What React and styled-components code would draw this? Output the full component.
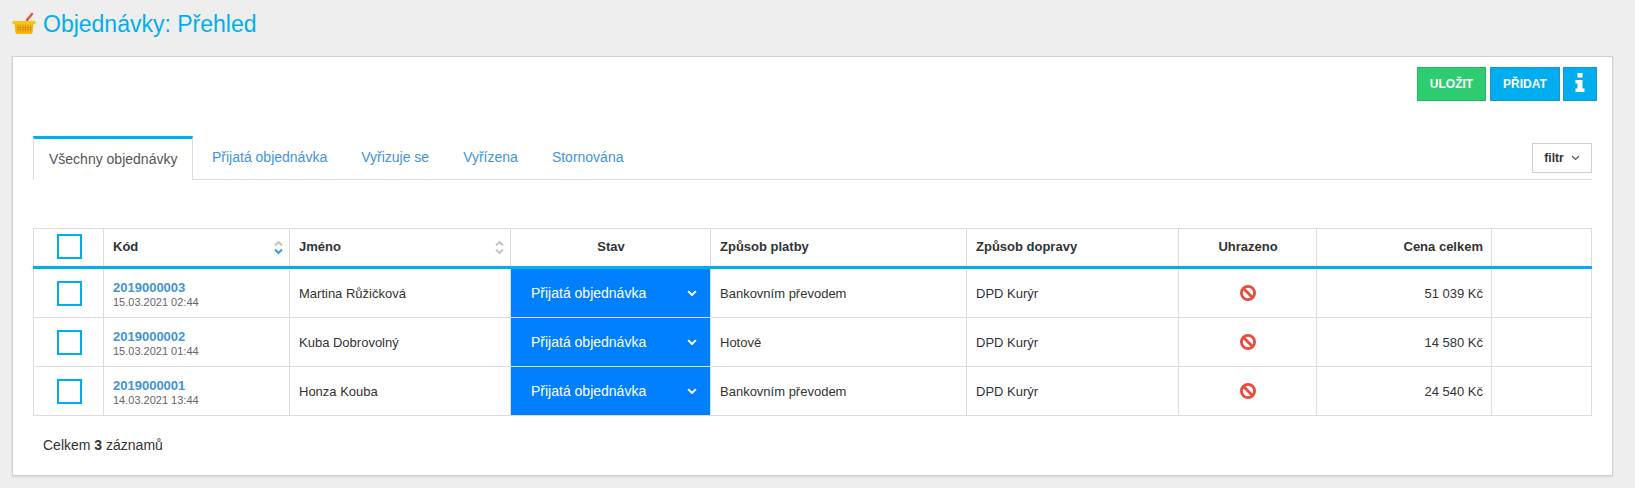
import React from 'react';
import styled, { createGlobalStyle } from 'styled-components';

const GlobalStyle = createGlobalStyle`
  html, body {
    margin: 0;
    padding: 0;
    background: #eeeeee;
    font-family: "Liberation Sans", Arial, sans-serif;
    color: #333;
  }
`;

const Page = styled.div`
  width: 1635px;
  height: 488px;
  overflow: hidden;
  box-sizing: border-box;
  padding: 0 22px 0 12px;
`;

const PageHeader = styled.div`
  height: 56px;
  display: flex;
  align-items: flex-start;
  padding-top: 10px;
  box-sizing: border-box;
  gap: 7px;
`;

const Title = styled.h1`
  margin: 0;
  font-size: 23px;
  font-weight: 400;
  line-height: 28px;
  color: #00aeef;
`;

const BasketIcon = styled.svg`
  flex: none;
  margin-top: 2px;
`;

const Panel = styled.div`
  height: 420px;
  box-sizing: border-box;
  background: #fff;
  border: 1px solid #cfcfcf;
  box-shadow: 0 1px 2px rgba(0, 0, 0, 0.1);
  padding: 10px 20px 0 20px;
`;

const Toolbar = styled.div`
  display: flex;
  justify-content: flex-end;
  gap: 3px;
  margin-right: -5px;
  height: 34px;
`;

const ActionButton = styled.button`
  height: 34px;
  width: ${props => props.width};
  margin-right: ${props => props.gapRight || 0};
  padding: 0;
  box-sizing: border-box;
  border: 1px solid ${props => props.green ? '#27b565' : '#1c94d8'};
  background: ${props => props.green ? '#2ecc71' : '#00aeef'};
  color: #fff;
  font-family: inherit;
  font-size: 12px;
  font-weight: 700;
  display: flex;
  align-items: center;
  justify-content: center;
`;

const InfoShape = styled.svg`
  margin-top: -4px;
`;

const TabBar = styled.div`
  margin-top: 35px;
  height: 44px;
  box-sizing: border-box;
  display: flex;
  align-items: flex-start;
  border-bottom: 1px solid #dcdcdc;
`;

const ActiveTab = styled.div`
  width: 160px;
  height: 44px;
  box-sizing: border-box;
  border-top: 3px solid #00aeef;
  border-left: 1px solid #dcdcdc;
  border-right: 1px solid #dcdcdc;
  background: #fff;
  color: #555;
  font-size: 14px;
  padding-top: 12px;
  padding-left: 15px;
  line-height: 17px;
  margin-right: 2px;
`;

const Tab = styled.div`
  color: #3f94dc;
  font-size: 14px;
  line-height: 17px;
  padding: 13px 17px 0;
`;

const FilterButton = styled.button`
  margin-left: auto;
  margin-top: 7px;
  width: 60px;
  height: 30px;
  box-sizing: border-box;
  background: #fff;
  border: 1px solid #cfcfcf;
  color: #333;
  font-family: inherit;
  font-size: 12px;
  font-weight: 700;
  display: flex;
  align-items: center;
  justify-content: center;
  gap: 7px;
  padding: 0;
`;

const Table = styled.table`
  margin-top: 48px;
  width: 1558px;
  table-layout: fixed;
  border-collapse: collapse;
  font-size: 13px;
`;

const HeadCell = styled.th`
  height: 39px;
  padding: 0 8px 2px 9px;
  border: 1px solid #dcdcdc;
  border-bottom: 3px solid #00aeef;
  box-sizing: border-box;
  font-size: 13px;
  font-weight: 700;
  color: #333;
  text-align: ${props => props.align || 'left'};
  position: relative;
`;

const Cell = styled.td`
  height: 49px;
  padding: ${props => props.pushDown ? '3px' : '0'} 8px 0 9px;
  border: 1px solid #dcdcdc;
  box-sizing: border-box;
  color: #333;
  text-align: ${props => props.align || 'left'};
`;

const StatusCell = styled.td`
  height: 49px;
  padding: 0;
  border: 1px solid #dcdcdc;
  box-sizing: border-box;
`;

const StatusSelect = styled.div`
  height: 48px;
  background: #007fff;
  color: #fff;
  font-size: 14px;
  display: flex;
  align-items: center;
  justify-content: space-between;
  padding: 0 13px 0 20px;
`;

const CheckBox = styled.span`
  display: block;
  width: 25px;
  height: 25px;
  box-sizing: border-box;
  border: 2px solid #00aeef;
  margin: 0 auto;
`;

const CodeLink = styled.div`
  color: #3f94dc;
  font-size: 13px;
  font-weight: 700;
  line-height: 15px;
`;

const DateText = styled.div`
  color: #666;
  font-size: 11px;
  line-height: 15px;
`;

const SortIcon = styled.svg`
  position: absolute;
  right: 6px;
  top: 11px;
`;

const NoIconShape = styled.svg`
  display: block;
  margin: 0 auto;
`;

const Footer = styled.div`
  margin-top: 21px;
  padding-left: 10px;
  font-size: 14px;
  line-height: 16px;
  color: #333;
`;

const Basket = () => (
  <BasketIcon width="24" height="22" viewBox="0 0 24 22">
    <path d="M15 8 L20 2" stroke="#e8503a" strokeWidth="2.4" strokeLinecap="round" />
    <path d="M0.5 9 H23.5 V12 H0.5 Z" fill="#f5c518" />
    <path d="M2.5 12 H21.5 L20.5 21 Q20.4 22 19 22 H5 Q3.6 22 3.5 21 Z" fill="#f2b90f" />
    <path d="M6 13.5 V19.5 M8.5 13.5 V19.5 M11 13.5 V19.5 M13.5 13.5 V19.5 M16 13.5 V19.5 M18.5 13.5 V19.5" stroke="#e08a12" strokeWidth="1" />
    <path d="M5 15.5 H19.5 M5 17.5 H19.5" stroke="#e08a12" strokeWidth="0.7" />
  </BasketIcon>
);

const InfoIcon = () => (
  <InfoShape width="10" height="19" viewBox="0 0 10 19" fill="#fff">
    <rect x="2.5" y="0" width="5" height="4.5" />
    <path d="M0.5 7 H7.5 V15.5 H9.5 V19 H0.5 V15.5 H2.5 V10.5 H0.5 Z" />
  </InfoShape>
);

const NoIcon = () => (
  <NoIconShape width="16" height="16" viewBox="0 0 16 16" fill="none" stroke="#e74c3c" strokeWidth="2.8">
    <circle cx="8" cy="8" r="6.6" />
    <path d="M3.5 3.5 L12.5 12.5" />
  </NoIconShape>
);

const Sort = ({ active }) => (
  <SortIcon width="9" height="15" viewBox="0 0 9 15" fill="none" strokeWidth="2">
    <path d="M1 5.5 L4.5 2 L8 5.5" stroke="#c4c4c4" />
    <path d="M1 9.5 L4.5 13 L8 9.5" stroke={active ? '#2b9fe8' : '#c4c4c4'} />
  </SortIcon>
);

const Chevron = ({ color, width, size = 9 }) => (
  <svg width={size} height={size * 0.67} viewBox="0 0 9 6" fill="none">
    <path d="M1 1 L4.5 4.5 L8 1" stroke={color} strokeWidth={width} />
  </svg>
);

const orders = [
  { code: '2019000003', date: '15.03.2021 02:44', name: 'Martina Růžičková', pay: 'Bankovním převodem', price: '51 039 Kč' },
  { code: '2019000002', date: '15.03.2021 01:44', name: 'Kuba Dobrovolný', pay: 'Hotově', price: '14 580 Kč' },
  { code: '2019000001', date: '14.03.2021 13:44', name: 'Honza Kouba', pay: 'Bankovním převodem', price: '24 540 Kč' },
];

const colWidths = [70, 186, 221, 200, 256, 212, 138, 175, 100];

export default function App() {
  return (
    <Page>
      <GlobalStyle />
      <PageHeader>
        <Basket />
        <Title>Objednávky: Přehled</Title>
      </PageHeader>
      <Panel>
        <Toolbar>
          <ActionButton green width="69px" gapRight="1px">ULOŽIT</ActionButton>
          <ActionButton width="70px">PŘIDAT</ActionButton>
          <ActionButton width="34px"><InfoIcon /></ActionButton>
        </Toolbar>
        <TabBar>
          <ActiveTab>Všechny objednávky</ActiveTab>
          <Tab>Přijatá objednávka</Tab>
          <Tab>Vyřizuje se</Tab>
          <Tab>Vyřízena</Tab>
          <Tab>Stornována</Tab>
          <FilterButton>filtr <Chevron color="#555" width="1.2" /></FilterButton>
        </TabBar>
        <Table>
          <colgroup>
            {colWidths.map((w, i) => <col key={i} width={w} />)}
          </colgroup>
          <thead>
            <tr>
              <HeadCell><CheckBox /></HeadCell>
              <HeadCell>Kód<Sort active /></HeadCell>
              <HeadCell>Jméno<Sort /></HeadCell>
              <HeadCell align="center">Stav</HeadCell>
              <HeadCell>Způsob platby</HeadCell>
              <HeadCell>Způsob dopravy</HeadCell>
              <HeadCell align="center">Uhrazeno</HeadCell>
              <HeadCell align="right">Cena celkem</HeadCell>
              <HeadCell />
            </tr>
          </thead>
          <tbody>
            {orders.map(o => (
              <tr key={o.code}>
                <Cell><CheckBox /></Cell>
                <Cell pushDown>
                  <CodeLink>{o.code}</CodeLink>
                  <DateText>{o.date}</DateText>
                </Cell>
                <Cell>{o.name}</Cell>
                <StatusCell>
                  <StatusSelect>
                    Přijatá objednávka
                    <Chevron color="#fff" width="1.8" size={10} />
                  </StatusSelect>
                </StatusCell>
                <Cell>{o.pay}</Cell>
                <Cell>DPD Kurýr</Cell>
                <Cell><NoIcon /></Cell>
                <Cell align="right">{o.price}</Cell>
                <Cell />
              </tr>
            ))}
          </tbody>
        </Table>
        <Footer>Celkem <b>3</b> záznamů</Footer>
      </Panel>
    </Page>
  );
}
